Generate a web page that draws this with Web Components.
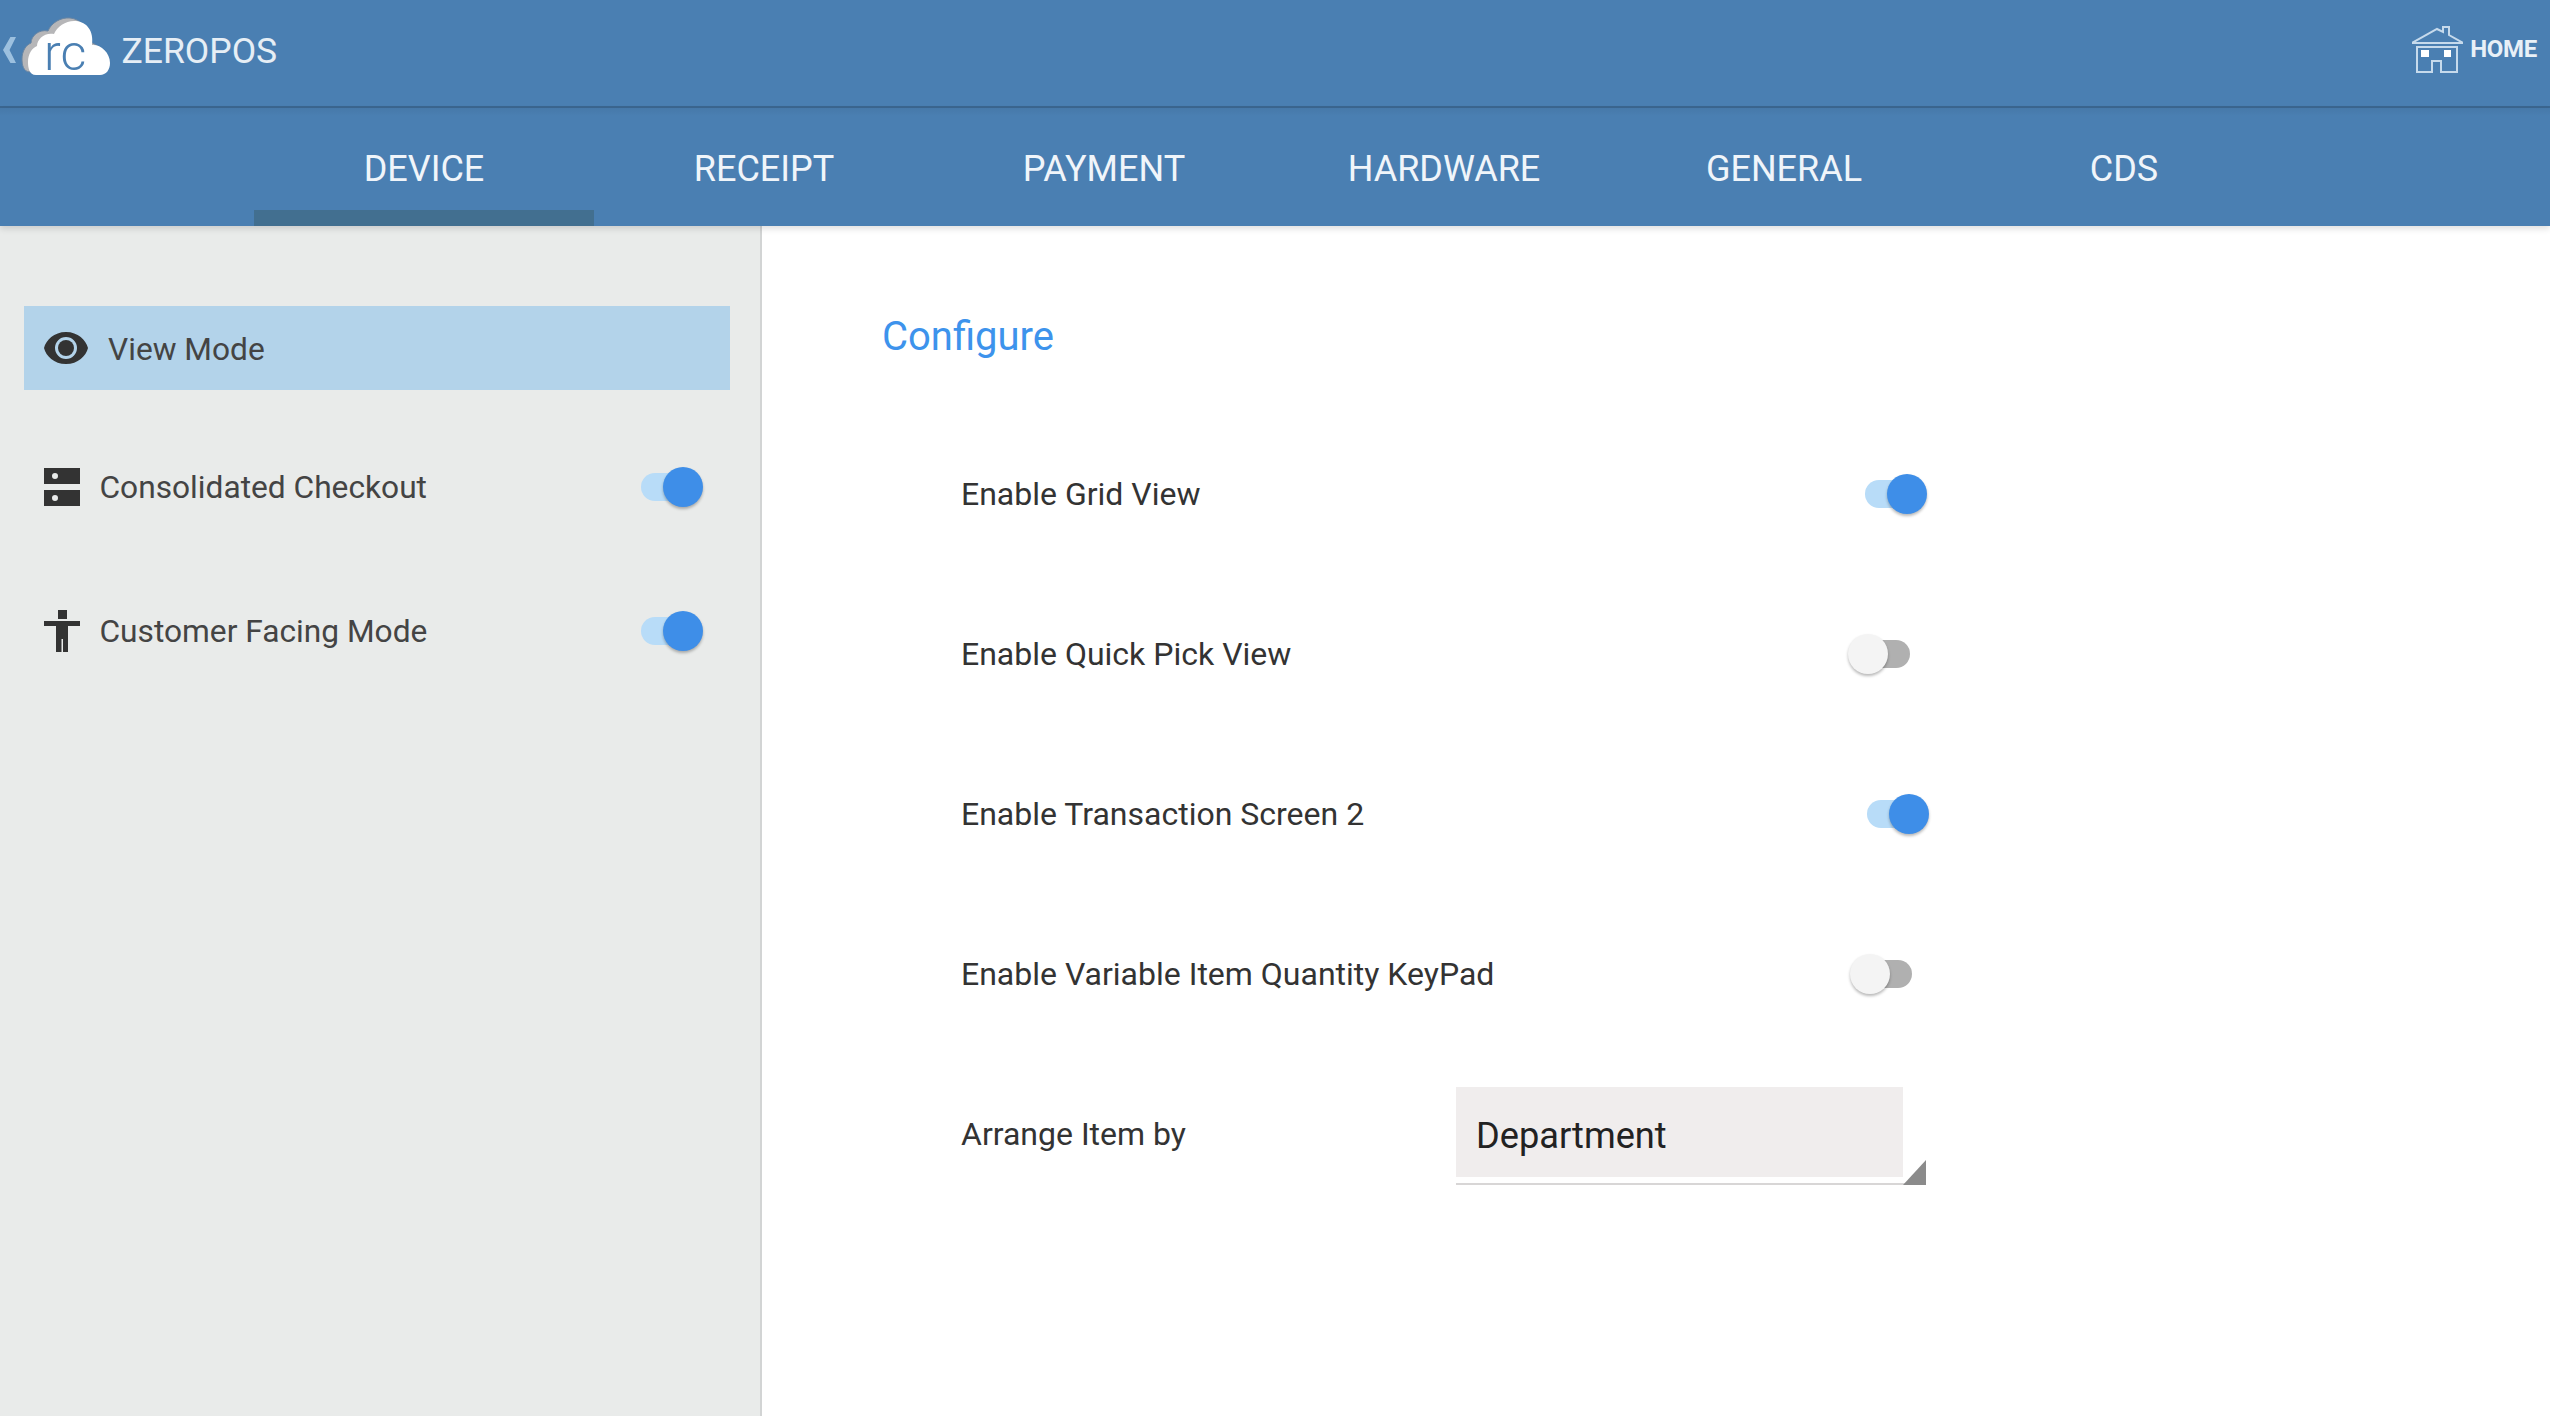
<!DOCTYPE html>
<html lang="en"><head><meta charset="utf-8"><title>ZEROPOS</title>
<style>
html,body{margin:0;padding:0;height:100%;background:#fff;font-family:Roboto,"Liberation Sans",sans-serif}
</style></head>
<body>
<pos-app>
  <top-bar slot="top" title-text="ZEROPOS"></top-bar>
  <tab-bar slot="tabs">
    <tab-item active>DEVICE</tab-item><tab-item>RECEIPT</tab-item><tab-item>PAYMENT</tab-item><tab-item>HARDWARE</tab-item><tab-item>GENERAL</tab-item><tab-item>CDS</tab-item>
  </tab-bar>
  <side-nav slot="side">
    <side-item active icon="eye">View Mode</side-item>
    <side-item icon="server" toggle>Consolidated Checkout</side-item>
    <side-item icon="person" toggle>Customer Facing Mode</side-item>
  </side-nav>
  <config-panel slot="main" heading="Configure">
    <config-row end="966">Enable Grid View<on-off on slot="control"></on-off></config-row>
    <config-row end="949">Enable Quick Pick View<on-off slot="control"></on-off></config-row>
    <config-row end="968">Enable Transaction Screen 2<on-off on slot="control"></on-off></config-row>
    <config-row end="951">Enable Variable Item Quantity KeyPad<on-off slot="control"></on-off></config-row>
    <config-row end="965">Arrange Item by<spinner-box slot="control">Department</spinner-box></config-row>
  </config-panel>
</pos-app>
<script>
function def(name, css, html){
  customElements.define(name, class extends HTMLElement{
    constructor(){super();const r=this.attachShadow({mode:'open'});r.innerHTML='<style>'+css+'</style>'+(typeof html==='function'?html(this):html);}
  });
}
const ICONS={
 eye:'<svg width="44" height="32" viewBox="0 0 44 32" style="margin-right:20px"><path fill="#333" fill-rule="evenodd" d="M22 0C34 0 42 8 44 16 42 24 34 32 22 32 10 32 2 24 0 16 2 8 10 0 22 0ZM22 5A11 11 0 1 0 22 27 11 11 0 1 0 22 5Z"/><circle cx="22" cy="16" r="8" fill="#333"/></svg>',
 server:'<svg width="36" height="38" viewBox="0 0 36 38" style="margin-right:21px"><path fill="#333" fill-rule="evenodd" d="M0 0H36V16H0ZM11 5A3 3 0 1 0 11 11 3 3 0 1 0 11 5ZM0 22H36V38H0ZM11 27A3 3 0 1 0 11 33 3 3 0 1 0 11 27Z"/></svg>',
 person:'<svg width="36" height="42" viewBox="0 0 36 42" style="margin-right:21px"><path fill="#333" d="M14 0H23V9H14ZM0 11H36V16H24V42H19V29H17.500V42H12V16H0Z"/></svg>'
};
def('pos-app',
 ':host{display:grid;grid-template-columns:762px 1fr;grid-template-rows:auto 1fr;height:1416px;overflow:hidden;font-family:Roboto,"Liberation Sans",sans-serif}'+
 '.t{grid-column:1/3;position:relative;z-index:2}',
 '<div class="t"><slot name="top"></slot><slot name="tabs"></slot></div><slot name="side"></slot><slot name="main"></slot>');
def('top-bar',
 ':host{display:flex;align-items:flex-start;height:106px;background:#4a7fb2;border-bottom:2px solid #3b6690;color:#e8eff6}'+
 '.ch{margin:37px 0 0 3px}.logo{margin:12px 0 0 4px}.name{font-size:35.5px;line-height:40px;margin:31px 0 0 9.500px;color:#e6eef5}'+
 '.home{margin-left:auto;display:flex;align-items:flex-start;padding-right:13px}.home svg{margin:26px 7px 0 0}.home span{font-size:24px;font-weight:700;line-height:28px;margin-top:35px;color:#e8f0f7;letter-spacing:-.3px}',
 h=>`<svg class="ch" width="13" height="26" viewBox="0 0 14 28"><path fill="#9cc0df" d="M14 0 7 14 14 28 8 28 0 14 8 0Z"/></svg>
 <svg class="logo" width="92" height="74" viewBox="0 0 92 74">
  <defs><path id="cl" d="M16 63C9 63 8 55 8 50 8 42 12 36 17 34 17 27 25 20 34 22 37 14 47 8 56 9 67 10 74 19 72 33 80 32 90 40 90 51 90 58 86 63 80 63Z"/></defs>
  <use href="#cl" transform="translate(-6,-3)" fill="#b6b6b8" stroke="#6a86a3" stroke-width="1"/>
  <use href="#cl" fill="#fff"/>
  <text x="24" y="58" font-family="Roboto,sans-serif" font-weight="300" font-size="50" fill="#4a7fb2">rc</text></svg>
 <span class="name">${h.getAttribute('title-text')}</span>
 <div class="home"><svg width="51" height="47" viewBox="0 0 51 47" fill="none" stroke="#c6daec" stroke-width="2"><path d="M0 17H51L37 9V1H31V6L25 3Z"/><path d="M5 21H45V46H29V35H20V46H5Z"/><path fill="#fff" stroke="none" d="M9 24H17V31H9ZM32 24H39V31H32Z"/></svg><span>HOME</span></div>`);
def('tab-bar',
 ':host{display:flex;height:118px;padding-left:254px;background:linear-gradient(rgba(0,0,0,.05),rgba(0,0,0,0) 8px),#4a7fb2;box-shadow:0 3px 6px rgba(0,0,0,.12)}',
 '<slot></slot>');
def('tab-item',
 ':host{box-sizing:border-box;display:flex;align-items:flex-start;justify-content:center;width:340px;height:118px;padding-top:40px;font-size:36px;line-height:42px;color:#f0f5fa}'+
 ':host([active]){border-bottom:16px solid #426f90}',
 '<slot></slot>');
def('side-nav',
 ':host{display:block;box-sizing:border-box;background:#e9ebea;border-right:2px solid #d2d4d4;padding:80px 30px 0 24px}',
 '<slot></slot>');
def('side-item',
 ':host{display:flex;align-items:center;box-sizing:border-box;height:144px;padding:0 27px 0 20px;font-size:31.700px;color:#444}'+
 ':host([active]){height:84px;margin-bottom:25px;background:#b3d3ea}'+
 ':host([active]) span{padding-top:2px}'+
 ':host([toggle]) span{margin-left:-1.500px}',
 h=>(ICONS[h.getAttribute('icon')]||'')+'<span style="flex:1"><slot></slot></span>'+(h.hasAttribute('toggle')?'<on-off on></on-off>':''));
def('on-off',
 ':host{position:relative;display:flex;align-items:center;justify-content:flex-start;width:62px;height:40px;flex:none}'+
 ':host([on]){justify-content:flex-end}'+
 '.track{position:absolute;top:6px;height:28px;width:44px;right:0;border-radius:14px;background:#b0b0b0}'+
 ':host([on]) .track{right:auto;left:0;background:#b8dcf8}'+
 '.knob{position:relative;width:40px;height:40px;border-radius:50%;background:#f4f4f4;box-shadow:0 2px 3px rgba(0,0,0,.28)}'+
 ':host([on]) .knob{background:#3e8ee8}',
 '<div class="track"></div><div class="knob"></div>');
def('config-panel',
 ':host{display:block;background:#fff;padding:85px 0 0 120px;min-width:0}'+
 'h2{margin:0;font-size:40px;line-height:52px;font-weight:400;color:#3d93ec}'+
 '.rows{display:block;padding:51px 0 0 79px}',
 h=>`<h2>${h.getAttribute('heading')}</h2><div class="rows"><slot></slot></div>`);
def('config-row',
 ':host{display:flex;align-items:center;justify-content:space-between;height:160px;font-size:32px;color:#333}',
 h=>{h.style.width=h.getAttribute('end')+'px';return '<span><slot></slot></span><slot name="control"></slot>';});
def('spinner-box',
 ':host{position:relative;display:block;box-sizing:border-box;width:470px;height:98px;margin-top:4px;padding-right:23px;border-bottom:2px solid #d8d6d6;color:#333}'+
 '.f{display:flex;align-items:center;box-sizing:border-box;height:90px;padding:6px 0 0 20px;background:#f0eded;font-size:36.200px;color:#222}'+
 '.c{position:absolute;right:0;bottom:-2px;width:0;height:0;border-left:23px solid transparent;border-bottom:25px solid #8b8b8b}',
 '<div class="f"><slot></slot></div><div class="c"></div>');
</script>
</body></html>
